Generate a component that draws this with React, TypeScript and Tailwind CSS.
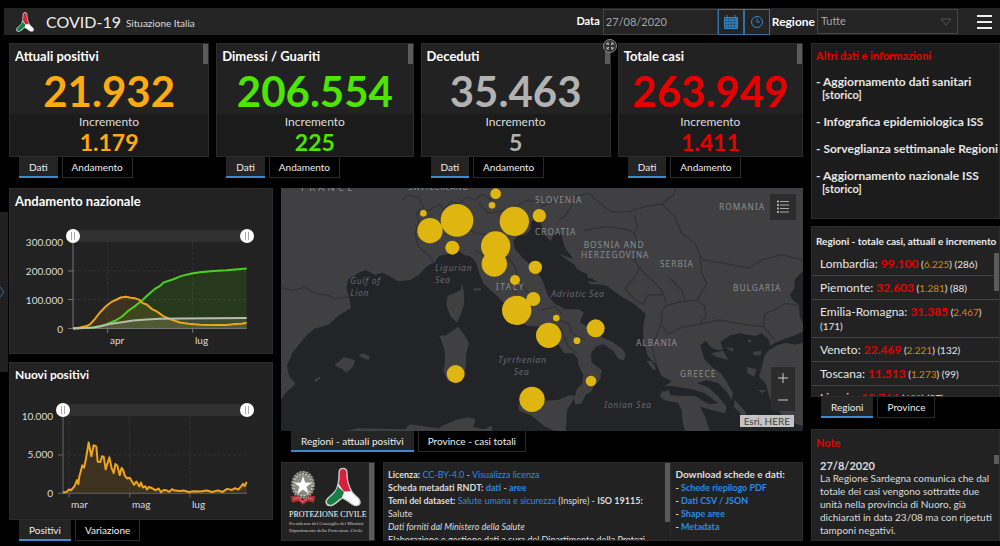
import type { ReactNode } from "react";

type Kpi = { title: string; value: string; delta: string; color: string };

const kpis: Kpi[] = [
  { title: "Attuali positivi", value: "21.932", delta: "1.179", color: "text-[#ffaa10]" },
  { title: "Dimessi / Guariti", value: "206.554", delta: "225", color: "text-[#4ce600]" },
  { title: "Deceduti", value: "35.463", delta: "5", color: "text-[#b2b2b2]" },
  { title: "Totale casi", value: "263.949", delta: "1.411", color: "text-[#e60000]" },
];

const regions = [
  { name: "Lombardia", total: "99.100", active: "6.225", inc: "286" },
  { name: "Piemonte", total: "32.603", active: "1.281", inc: "88" },
  { name: "Emilia-Romagna", total: "31.385", active: "2.467", inc: "171" },
  { name: "Veneto", total: "22.469", active: "2.221", inc: "132" },
  { name: "Toscana", total: "11.513", active: "1.273", inc: "99" },
  { name: "Liguria", total: "10.764", active: "459", inc: "27" },
];

const bubbles = [
  [445, 100, 10], [465, 152, 38], [546, 121, 49], [532, 203, 21], [662, 41, 16], [651, 76, 10],
  [718, 124, 44], [793, 107, 20], [662, 198, 44], [658, 252, 38], [781, 262, 20], [720, 300, 15],
  [725, 391, 44], [775, 357, 21], [821, 466, 38], [844, 414, 10], [906, 482, 10], [962, 445, 27],
  [948, 603, 16], [771, 658, 38], [542, 582, 27],
];

function Tabs({ items }: { items: string[] }) {
  return (
    <div role="tablist" className="flex gap-1 pl-[10px]">
      {items.map((t, i) => (
        <button
          key={t}
          role="tab"
          aria-selected={i === 0}
          className={
            i === 0
              ? "h-[21px] border-b-2 border-[#3a8bcd] bg-[#242424] px-[10px] text-[10px] leading-[18px] text-[#eee]"
              : "h-[21px] border border-t-0 border-[#2b2b2b] bg-black px-[9px] text-[10px] leading-[18px] text-[#eee]"
          }
        >
          {t}
        </button>
      ))}
    </div>
  );
}

function Scroll({ className }: { className: string }) {
  return <div aria-hidden="true" className={`absolute right-0 w-[5px] bg-[#5a5a5a] ${className}`} />;
}

function Panel({ children, className = "" }: { children: ReactNode; className?: string }) {
  return <section className={`relative overflow-hidden border border-[#2c2c2c] ${className}`}>{children}</section>;
}

function CivilLogo({ className }: { className: string }) {
  return (
    <svg viewBox="0 0 110 120" className={className} aria-hidden="true">
      <path
        d="M43 15C43 -1 67 -1 67 15C67 38 72 58 82 74C88 83 96 88 103 96C113 109 104 119 90 116C76 112 68 98 53 94C43 99 36 111 22 116C5 121 -2 106 8 95C18 86 27 81 34 69C42 53 43 34 43 15Z"
        fill="#fff"
        stroke="#c9c9c9"
        strokeWidth="4"
      />
      <path d="M45 15C45 2 65 2 65 15C65 38 70 57 79 73L58 74C51 66 46 57 42 51C45 39 45 27 45 15Z" fill="#d6203c" />
      <path d="M40 57C46 67 56 72 58 76C55 84 53 88 52 92C41 97 34 109 21 114C8 117 1 106 10 96C20 87 33 79 40 57Z" fill="#168044" />
    </svg>
  );
}

function Emblem() {
  return (
    <svg viewBox="0 0 84 112" className="h-[37px] w-7" aria-hidden="true">
      <ellipse cx="42" cy="48" rx="33" ry="40" fill="#5f6a5f" stroke="#9aa095" strokeWidth="5" strokeDasharray="7 3" />
      <ellipse cx="42" cy="48" rx="28" ry="33" fill="#8d8a7e" stroke="#c9c9c2" strokeWidth="4" strokeDasharray="6 4" />
      <path d="M42 20L49 41L70 41L53 54L60 76L42 63L24 76L31 54L14 41L35 41Z" fill="#fff" stroke="#999" />
      <path d="M5 83L24 79L42 94L60 79L79 83L75 102L57 97L42 108L27 97L9 102Z" fill="#b92e35" />
      <path d="M14 91L28 87L42 100L56 87L70 91" fill="none" stroke="#ddd" strokeWidth="3" strokeDasharray="3 3" />
    </svg>
  );
}

function RangeSlider({ label }: { label: string }) {
  const thumb =
    "pointer-events-none absolute inset-0 h-full w-full appearance-none bg-transparent [&::-webkit-slider-thumb]:pointer-events-auto [&::-webkit-slider-thumb]:h-[14px] [&::-webkit-slider-thumb]:w-[14px] [&::-webkit-slider-thumb]:appearance-none [&::-webkit-slider-thumb]:rounded-full [&::-webkit-slider-thumb]:bg-white [&::-webkit-slider-thumb]:bg-[linear-gradient(90deg,transparent_5px,#aaa_5px,#aaa_6px,transparent_6px,transparent_8px,#aaa_8px,#aaa_9px,transparent_9px)] [&::-webkit-slider-thumb]:bg-[length:14px_8px] [&::-webkit-slider-thumb]:bg-center [&::-webkit-slider-thumb]:bg-no-repeat";
  return (
    <div className="h-3 bg-[#303030]">
      <div className="relative -mx-[7px] h-3">
        <input type="range" aria-label={`${label}: inizio`} defaultValue={0} className={thumb} />
        <input type="range" aria-label={`${label}: fine`} defaultValue={100} className={thumb} />
      </div>
    </div>
  );
}

function Chart({ label, yLabels, axisClass, xAxis, children }: { label: string; yLabels: string[]; axisClass: string; xAxis: ReactNode; children: ReactNode }) {
  return (
    <div className="flex min-h-0 flex-1 flex-col pr-[25px] text-[10px] text-[#ddd]">
      <div className="flex min-h-0 flex-1">
        <div className={`-mb-[7px] flex flex-col justify-between pt-[5px] pr-[10px] text-right leading-[14px] ${axisClass}`}>
          {yLabels.map((y) => (
            <span key={y}>{y}</span>
          ))}
        </div>
        <div className="flex min-w-0 flex-1 flex-col">
          <RangeSlider label={label} />
          {children}
        </div>
      </div>
      <div className="flex">
        <div className={axisClass} />
        {xAxis}
      </div>
    </div>
  );
}

const green = "219,447 280,444 300,440 320,434 345,424 365,412 385,394 405,380 425,364 445,345 465,328 480,319 490,309 520,299 545,289 575,282 600,278 640,274 680,272 740,267";
const orange = "219,447 240,444 260,440 272,433 285,418 300,399 318,380 335,367 350,360 362,354 378,352 392,355 405,356 418,361 428,371 440,375 455,388 470,396 490,410 515,421 540,429 565,433 600,436 640,437 680,437 705,434 725,433 740,430";
const gray = "219,447 280,444 300,441 330,434 360,429 400,423 440,420 480,418 540,417 740,416";
const daily = "188,412 198,410 206,403 212,405 222,394 230,375 234,387 237,364 241,350 246,331 251,338 256,316 265,263 273,304 280,271 288,275 292,320 300,321 305,304 310,305 316,343 327,307 334,340 340,354 345,327 351,332 358,360 364,338 369,346 373,361 380,370 388,368 395,379 401,389 408,379 417,394 422,382 428,397 435,393 440,403 446,395 455,399 465,405 475,400 482,411 490,404 500,406 507,410 515,402 523,406 540,407 550,406 565,410 580,408 600,409 620,406 635,410 653,406 667,410 680,401 695,404 704,399 714,403 723,393 728,386 733,393 739,380";

function NationalChart() {
  return (
    <Chart
      label="Andamento nazionale"
      yLabels={["300.000", "200.000", "100.000", "0"]}
      axisClass="w-[63px] shrink-0"
      xAxis={
        <div className="grid flex-1 grid-cols-[37fr_85fr_52fr] pt-1 leading-[14px]">
          <span className="col-start-2">apr</span>
          <span>lug</span>
        </div>
      }
    >
      <svg viewBox="219 187 522 261" preserveAspectRatio="none" className="block min-h-0 w-full flex-1 overflow-visible" role="img" aria-label="Andamento nazionale">
        <path d="M219 274H740M219 360H740M323 187V447M578 187V447" stroke="#3c3c3c" strokeWidth="2" strokeDasharray="9 6" />
        <polygon points={`${orange} 740,447`} fill="#ffaa10" fillOpacity=".12" />
        <polygon points={`${green} 740,447`} fill="#4ce600" fillOpacity=".12" />
        <polygon points={`${gray} 740,447`} fill="#ddd" fillOpacity=".12" />
        <path d="M219 187V447H740M204 274H219M204 360H219M204 447H219M323 447V460M578 447V460" fill="none" stroke="#777" strokeWidth="3" />
        <polyline points={green} fill="none" stroke="#4bd21c" strokeWidth="6" />
        <polyline points={orange} fill="none" stroke="#eaa51c" strokeWidth="6" />
        <polyline points={gray} fill="none" stroke="#b8bbae" strokeWidth="6" />
      </svg>
    </Chart>
  );
}

function DailyChart() {
  return (
    <Chart
      label="Nuovi positivi"
      yLabels={["10.000", "5.000", "0"]}
      axisClass="w-[53px] shrink-0"
      xAxis={
        <div className="grid flex-1 grid-cols-[8fr_61fr_60fr_55fr] pt-1 leading-[14px]">
          <span className="col-start-2">mar</span>
          <span>mag</span>
          <span>lug</span>
        </div>
      }
    >
      <svg viewBox="188 184 552 230" preserveAspectRatio="none" className="block min-h-0 w-full flex-1 overflow-visible" role="img" aria-label="Nuovi positivi">
        <path d="M188 300H740M206 184V414M388 184V414M569 184V414" stroke="#3c3c3c" strokeWidth="2" strokeDasharray="9 6" />
        <polygon points={`${daily} 739,414 188,414`} fill="#ffaa10" fillOpacity=".12" />
        <path d="M188 184V414H740M173 300H188M173 414H188M206 414V427M388 414V427M569 414V427" fill="none" stroke="#666" strokeWidth="3" />
        <polyline points={daily} fill="none" stroke="#eea51d" strokeWidth="6" strokeLinejoin="round" />
      </svg>
    </Chart>
  );
}

function ItalyMap() {
  return (
    <svg viewBox="18 24 1566 729" preserveAspectRatio="xMidYMid slice" className="absolute inset-0 h-full w-full" role="img" aria-label="Mappa dei casi attuali per regione">
      <rect x="-500" y="-500" width="2600" height="1800" fill="#404042" />
      <g fill="#222428">
        <path d="M18 660L34 636L62 612L42 588L36 558L52 518L95 466L118 446L160 434L190 407L228 384L222 350L214 322L220 298L248 280L272 270L300 285L322 278L340 287L370 304L406 300L432 284L456 258L480 246L492 228L520 222L550 212L566 224L588 230L604 250L612 278L626 312L656 338L690 372L728 424L760 438L800 440L840 480L868 520L895 520L908 535L910 555L925 585L921 612L905 628L900 648L885 645L850 660L795 662L740 668L730 676L732 692L768 706L810 740L840 753L652 753L650 736L630 748L612 745L594 740L602 718L580 712L542 720L505 736L490 745L440 738L405 733L390 748L250 745L210 753H18Z" />
        <path d="M872 753L876 690L898 655L900 672L918 672L932 645L948 635L958 617L976 598L980 570L950 548L948 520L962 500L985 492L1015 513L1030 537L1046 541L1052 522L1040 505L1012 486L985 473L945 446L915 426L926 398L912 388L872 388L840 372L818 344L802 300L780 265L745 236L720 208L714 184L730 165L750 164L766 150L768 125L778 118L796 124L808 164L828 184L834 168L842 150L858 162L870 204L890 230L906 268L940 284L960 302L1000 320L1040 350L1078 372L1112 402L1104 440L1106 482L1118 528L1145 555L1160 588L1190 604L1166 622L1154 650L1175 662L1208 668L1220 690L1222 720L1230 753Z" />
        <path d="M1276 496L1292 482L1307 500L1326 510L1344 508L1336 485L1366 466L1394 460L1440 468L1460 460L1480 478L1487 498L1468 530L1460 562L1452 590L1472 610L1480 640L1490 670L1510 690L1530 720L1584 738V753H1304L1290 710L1276 680L1310 690L1350 700L1355 680L1330 650L1302 623L1266 610L1295 600L1330 610L1355 635L1370 660L1374 640L1354 604L1338 580L1310 560L1288 538Z" />
        <path d="M1584 272L1560 298L1558 326L1544 344L1553 360L1572 374L1574 408L1584 430Z" />
        <path d="M1584 455L1560 466L1530 476L1500 488L1470 510L1476 515L1506 496L1534 488L1560 494L1584 488Z" />
        <path d="M1150 622L1190 617L1250 628L1290 640L1330 670L1300 672L1260 648L1210 647L1178 644Z" />
      </g>
      <g fill="#404042">
        <path d="M560 308L558 330L518 348L514 374L526 408L546 428L558 402L568 370L566 334Z" />
        <path d="M493 468L514 466L550 440L565 460L582 490L574 520L572 568L548 604L518 602L505 572L511 538L508 506Z" />
        <path d="M178 556L206 532L240 540L234 560L214 578L200 566Z" />
        <path d="M252 526L264 520L285 530L280 540L262 534ZM118 600L132 590L138 594L122 606ZM594 326L616 324L620 330L598 332Z" />
        <path d="M934 280L985 292L984 298L940 294ZM937 304L1000 310L998 316L945 312ZM850 220L900 240L916 266L885 245ZM1115 544L1130 542L1144 566L1135 570ZM1158 640L1180 630L1190 652L1166 660Z" />
        <path d="M1308 520L1344 512L1360 540L1324 530ZM1350 500L1376 506L1372 516ZM1415 480L1430 480L1425 490ZM1435 515L1460 512L1456 526L1435 525ZM1415 560L1445 568L1438 590L1418 580ZM1450 630L1475 630L1460 640ZM1380 660L1415 700L1406 710L1376 680ZM1430 700L1480 718L1472 730L1440 715ZM1520 680L1584 690V710L1545 710Z" />
      </g>
      <g fill="none" stroke="#323234" strokeWidth="4">
        <path d="M18 322L52 332L90 322L120 340L160 346L180 356L226 350" />
        <path d="M380 60L400 45L430 52L445 80L425 100L432 130L420 160L430 200L460 224L475 245M425 100L465 90L492 72L506 88L530 64L550 74L574 50L600 60L622 42L650 60M580 150L610 160L640 166M610 70L640 100L690 90L730 75L760 60L800 70M600 210L640 235L690 270M690 220L720 260L730 300L760 340L790 370M700 320L730 345M800 390L840 380L862 402M850 420L880 430L890 460L930 480M855 440L880 500L905 520" />
        <path d="M795 80L850 60L900 50L940 40L970 65L1010 96L1060 95L1110 80L1160 72L1195 45L1205 24M900 60L870 110L850 118M1160 72L1200 110L1220 160L1260 190L1275 225L1285 240L1350 250L1420 265L1460 240L1520 224L1584 240" />
        <path d="M925 152L960 145L1000 140L1060 150L1078 160L1090 200L1078 240L1094 265L1072 300L1050 325L1080 360L1110 375M1078 105L1088 140L1076 162M1275 225L1280 280L1296 310L1266 360L1210 366L1170 378L1160 400L1160 430L1130 500L1145 555M1094 265L1130 300L1160 330L1175 370M1105 370L1120 345L1160 345M1180 290L1220 330L1230 360M1266 360L1290 380L1292 410L1270 434L1220 442L1180 462L1162 440M1270 434L1330 420L1400 432L1465 440L1470 400L1500 390L1530 370L1570 376M1465 440L1500 480" />
      </g>
      <g fill="#8d8d8f" fontFamily="'Noto Sans', sans-serif" fontSize="25" className="tracking-[3px]">
        <text x="78" y="33" fontSize="28" className="tracking-[10px]">FRANCE</text>
        <text x="400" y="31" fontSize="22">SWITZERLAND</text>
        <text x="780" y="68">SLOVENIA</text>
        <text x="780" y="164">CROATIA</text>
        <text x="1332" y="90">ROMANIA</text>
        <text x="926" y="204">BOSNIA AND</text>
        <text x="918" y="235">HERZEGOVINA</text>
        <text x="1155" y="262">SERBIA</text>
        <text x="1374" y="333">BULGARIA</text>
        <text x="1083" y="498">ALBANIA</text>
        <text x="1215" y="590">GREECE</text>
        <text x="662" y="329" className="tracking-[5px]">ITALY</text>
      </g>
      <g fill="#65676c" fontFamily="'Noto Sans', sans-serif" fontSize="26" fontStyle="italic" className="tracking-[2px]">
        <text x="226" y="313">Gulf of</text>
        <text x="226" y="349">Lion</text>
        <text x="480" y="274">Ligurian</text>
        <text x="480" y="309">Sea</text>
        <text x="670" y="550">Tyrrhenian</text>
        <text x="716" y="586">Sea</text>
        <text x="829" y="350">Adriatic Sea</text>
        <text x="988" y="683">Ionian Sea</text>
      </g>
      <g fill="#dfb510">
        {bubbles.map(([x, y, r]) => (
          <circle key={`${x}-${y}`} cx={x} cy={y} r={r} />
        ))}
      </g>
    </svg>
  );
}

function Header() {
  return (
    <header className="ml-1 flex h-[27px] shrink-0 items-center bg-[#242424] pl-[11px]">
      <CivilLogo className="h-5 w-5" />
      <h1 className="ml-[11px] text-[16px] leading-6 text-[#eee]">COVID-19</h1>
      <span className="mt-1 ml-[5px] text-[10px] text-[#ddd]">Situazione Italia</span>
      <label htmlFor="data" className="ml-auto text-[11px] font-bold text-white">Data</label>
      <input id="data" defaultValue="27/08/2020" className="ml-[3px] h-[26px] w-[115px] border border-[#444] bg-[#242424] px-[2px] text-[11px] text-[#a5a5a5] outline-none" />
      <button aria-label="Calendario" className="flex h-[26px] w-[26px] items-center justify-center border border-[#2f72a8]">
        <svg viewBox="0 0 16 14" className="h-[14px] w-4" aria-hidden="true">
          <path d="M1 2H15V14H1Z" fill="#3388cc" fillOpacity=".35" />
          <path d="M1.500 2.500H14.500V13.500H1.500ZM1.500 5H14.500M1.500 8H14.500M1.500 11H14.500M4 2V14M7 2V14M10 2V14M13 2V14M4 0V2M12 0V2" fill="none" stroke="#3388cc" />
        </svg>
      </button>
      <button aria-label="Ora" className="flex h-[26px] w-[26px] items-center justify-center border border-[#2f72a8]">
        <svg viewBox="0 0 14 14" className="h-[14px] w-[14px]" fill="none" stroke="#3388cc" aria-hidden="true">
          <circle cx="7" cy="7" r="5.500" />
          <path d="M7 3.500V7H10" />
        </svg>
      </button>
      <label htmlFor="regione" className="ml-[2px] text-[12px] font-bold text-white">Regione</label>
      <div className="relative ml-[2px]">
        <select id="regione" className="block h-[25px] w-[141px] appearance-none border border-[#444] bg-[#242424] px-[3px] text-[11px] text-[#a5a5a5]">
          <option>Tutte</option>
        </select>
        <svg viewBox="0 0 12 8" className="pointer-events-none absolute top-[9px] right-[6px] h-2 w-3" aria-hidden="true">
          <path d="M1 1H11L6 7Z" fill="none" stroke="#555" />
        </svg>
      </div>
      <button aria-label="Menu" className="mr-2 ml-[19px] flex flex-col gap-1">
        <span className="h-[2px] w-[15px] bg-[#eee]" />
        <span className="h-[2px] w-[15px] bg-[#eee]" />
        <span className="h-[2px] w-[15px] bg-[#eee]" />
      </button>
    </header>
  );
}

function KpiCard({ kpi, expand }: { kpi: Kpi; expand: boolean }) {
  return (
    <div className="relative">
      <Panel className="bg-[#222]">
        <h2 className="pt-[4px] pl-[5px] text-[13px] leading-4 font-bold text-white">{kpi.title}</h2>
        <p className={`pt-1 text-center text-[42px] leading-[46px] font-bold ${kpi.color}`}>{kpi.value}</p>
        <div className="bg-[#1b1b1b] pb-[2px] text-center">
          <p className="text-[12px] leading-4 text-[#ddd]">Incremento</p>
          <p className={`text-[23px] leading-6 font-bold ${kpi.color}`}>{kpi.delta}</p>
        </div>
        <Scroll className="top-0 h-5" />
      </Panel>
      {expand && (
        <button aria-label="Espandi" className="absolute -top-1 -right-[6px] h-[14px] w-[14px] rounded-full border border-[#888] bg-[#333]">
          <svg viewBox="0 0 12 12" className="h-3 w-3" fill="none" stroke="#bbb" aria-hidden="true">
            <path d="M3 5V3H5M7 3H9V5M9 7V9H7M5 9H3V7M3 3L5 5M9 3L7 5M9 9L7 7M3 9L5 7" />
          </svg>
        </button>
      )}
      <Tabs items={["Dati", "Andamento"]} />
    </div>
  );
}

const link = "text-[#2b8ae6]";

export default function App() {
  return (
    <div className="flex h-screen min-h-[540px] flex-col overflow-hidden bg-black pt-2 pb-[5px] font-['Lato','Liberation_Sans',sans-serif]">
      <Header />
      <div className="mt-2 flex min-h-0 flex-1">
        <button aria-label="Apri pannello laterale" className="mt-[169px] mr-px flex h-40 w-2 shrink-0 items-center bg-[#202020]">
          <svg viewBox="0 0 6 12" className="h-3 w-[6px]" fill="none" stroke="#2f72a8" aria-hidden="true">
            <path d="M0 1L4 6L0 11" />
          </svg>
        </button>
        <main className="flex min-w-0 flex-1 flex-col gap-[10px]">
          <div className="grid grid-cols-[200fr_197fr_190fr_185fr] gap-[7px]">
            {kpis.map((k, i) => (
              <KpiCard key={k.title} kpi={k} expand={i === 2} />
            ))}
          </div>
          <div className="grid min-h-0 flex-1 grid-cols-[264fr_522fr] grid-rows-[minmax(0,1fr)] gap-2">
            <div className="flex min-h-0 flex-col">
              <Panel className="mb-2 flex flex-[166] flex-col bg-[#222] pb-[6px]">
                <h2 className="mb-[21px] pt-1 pl-[5px] text-[13px] leading-4 font-bold text-white">Andamento nazionale</h2>
                <NationalChart />
              </Panel>
              <Panel className="flex flex-[156] flex-col bg-[#222] pb-2">
                <h2 className="mb-[21px] pt-1 pl-[5px] text-[12px] leading-4 font-bold text-white">Nuovi positivi</h2>
                <DailyChart />
              </Panel>
              <Tabs items={["Positivi", "Variazione"]} />
            </div>
            <div className="flex min-h-0 min-w-0 flex-col">
              <div className="relative min-h-0 flex-1 overflow-hidden bg-[#222428]">
                <ItalyMap />
                <button aria-label="Legenda" className="absolute top-[6px] right-[7px] flex h-[26px] w-[26px] items-center justify-center bg-[#2c2c2c]">
                  <svg viewBox="0 0 14 14" className="h-[14px] w-[14px]" stroke="#aaa" aria-hidden="true">
                    <path d="M1 1.500H3M1 5H3M1 8.500H3M1 12H3" strokeWidth="2" />
                    <path d="M4 1.500H13M4 5H13M4 8.500H13M4 12H13" />
                  </svg>
                </button>
                <div className="absolute right-2 bottom-5 flex flex-col bg-[#2c2c2c]">
                  <button aria-label="Ingrandisci" className="flex h-[22px] w-6 items-center justify-center">
                    <svg viewBox="0 0 10 10" className="h-[10px] w-[10px]" stroke="#ccc" aria-hidden="true"><path d="M0 5H10M5 0V10" /></svg>
                  </button>
                  <button aria-label="Riduci" className="flex h-[22px] w-6 items-center justify-center">
                    <svg viewBox="0 0 10 10" className="h-[10px] w-[10px]" stroke="#ccc" aria-hidden="true"><path d="M0 5H10" /></svg>
                  </button>
                </div>
                <span className="absolute right-[9px] bottom-1 bg-[#c4c4c4] px-1 text-[10px] leading-3 text-[#444]">Esri, HERE</span>
              </div>
              <Tabs items={["Regioni - attuali positivi", "Province - casi totali"]} />
              <div className="mt-[10px] flex h-[79px] shrink-0 gap-2">
                <Panel className="w-[94px] shrink-0 bg-[#222] pt-1 pl-[7px]">
                  <div className="flex items-center gap-2">
                    <Emblem />
                    <CivilLogo className="h-10 w-9" />
                  </div>
                  <p className="mt-[3px] font-['Liberation_Serif',serif] text-[8px] leading-[10px] whitespace-nowrap text-white">PROTEZIONE CIVILE</p>
                  <p className="font-['Liberation_Serif',serif] text-[5px] leading-[7px] whitespace-nowrap text-[#ccc]">
                    Presidenza del Consiglio dei Ministri
                    <br />
                    Dipartimento della Protezione Civile
                  </p>
                  <Scroll className="inset-y-0" />
                </Panel>
                <div className="flex min-w-0 flex-1">
                  <Panel className="min-w-0 flex-[290] bg-[#222] pt-[5px] pl-1 text-[9px] leading-[13px] text-[#ddd]">
                    <p><b>Licenza:</b> <a href="#licenza" className={link}>CC-BY-4.0</a> - <a href="#visualizza" className={link}>Visualizza licenza</a></p>
                    <p><b>Scheda metadati RNDT:</b> <a href="#dati" className="font-bold text-[#2b8ae6]">dati</a> - <a href="#aree" className="font-bold text-[#2b8ae6]">aree</a></p>
                    <p><b>Temi del dataset:</b> <a href="#temi" className={link}>Salute umana e sicurezza</a> (Inspire) - <b>ISO 19115:</b><br />Salute</p>
                    <p className="italic">Dati forniti dal Ministero della Salute</p>
                    <p className="whitespace-nowrap">Elaborazione e gestione dati a cura del Dipartimento della Protezi</p>
                    <Scroll className="top-0 h-[59px]" />
                  </Panel>
                  <Panel className="min-w-0 flex-[130] border-l-0 bg-[#222] pt-[5px] pl-1 text-[9px] leading-[13px] font-bold text-[#ddd]">
                    <h2 className="text-[10px]">Download schede e dati:</h2>
                    <ul>
                      {["Schede riepilogo PDF", "Dati CSV / JSON", "Shape aree", "Metadata"].map((t) => (
                        <li key={t}>- <a href="#download" className={link}>{t}</a></li>
                      ))}
                    </ul>
                  </Panel>
                </div>
              </div>
            </div>
          </div>
        </main>
        <aside className="ml-2 flex w-[189px] shrink-0 flex-col">
          <Panel className="flex-[169] bg-[#1c1c1c] pt-[5px] pl-1 text-[12px] leading-[13px] font-bold text-[#e6e6e6]">
            <h2 className="mb-[13px] text-[11px] text-[#e60000]">Altri dati e informazioni</h2>
            <ul className="flex flex-col gap-[14px] whitespace-nowrap">
              <li>- <a href="#sanitari">Aggiornamento dati sanitari</a><span className="block pl-[6px] text-[11px]">[storico]</span></li>
              <li>- <a href="#infografica">Infografica epidemiologica ISS</a></li>
              <li>- <a href="#sorveglianza">Sorveglianza settimanale Regioni</a></li>
              <li>- <a href="#nazionale">Aggiornamento nazionale ISS</a><span className="block pl-[6px] text-[11px]">[storico]</span></li>
            </ul>
          </Panel>
          <Panel className="mt-[7px] flex min-h-0 flex-[169] flex-col bg-[#222]">
            <h2 className="pt-[7px] pb-1 pl-1 text-[10px] leading-[14px] font-bold whitespace-nowrap text-[#eee]">Regioni - totale casi, attuali e incremento</h2>
            <ul className="min-h-0 flex-1 overflow-hidden">
              {regions.map((r) => (
                <li key={r.name} className="border-b border-[#444] pt-[5px] pb-1 pl-2 text-[10px] leading-[14px] text-[#e6e6e6]">
                  <span className="text-[12px] leading-none">{r.name}: </span>
                  <span className="text-[12px] leading-none font-bold text-[#e60000]">{r.total}</span>{" "}
                  (<span className="text-[#c98a1e]">{r.active}</span>) <span>({r.inc})</span>
                </li>
              ))}
            </ul>
            <Scroll className="top-[26px] h-[38px]" />
          </Panel>
          <Tabs items={["Regioni", "Province"]} />
          <Panel className="mt-[11px] flex-[104] bg-[#222] pt-[6px] pl-1 text-[10px] leading-[13px] text-[#ddd]">
            <h2 className="mb-[10px] text-[11px] font-bold text-[#e60000]">Note</h2>
            <div className="pl-1">
              <p className="text-[11px] font-bold">27/8/2020</p>
              <p className="pr-[6px]">La Regione Sardegna comunica che dal totale dei casi vengono sottratte due unità nella provincia di Nuoro, già dichiarati in data 23/08 ma con ripetuti tamponi negativi.</p>
            </div>
            <Scroll className="top-[25px] h-[9px]" />
          </Panel>
        </aside>
      </div>
    </div>
  );
}
